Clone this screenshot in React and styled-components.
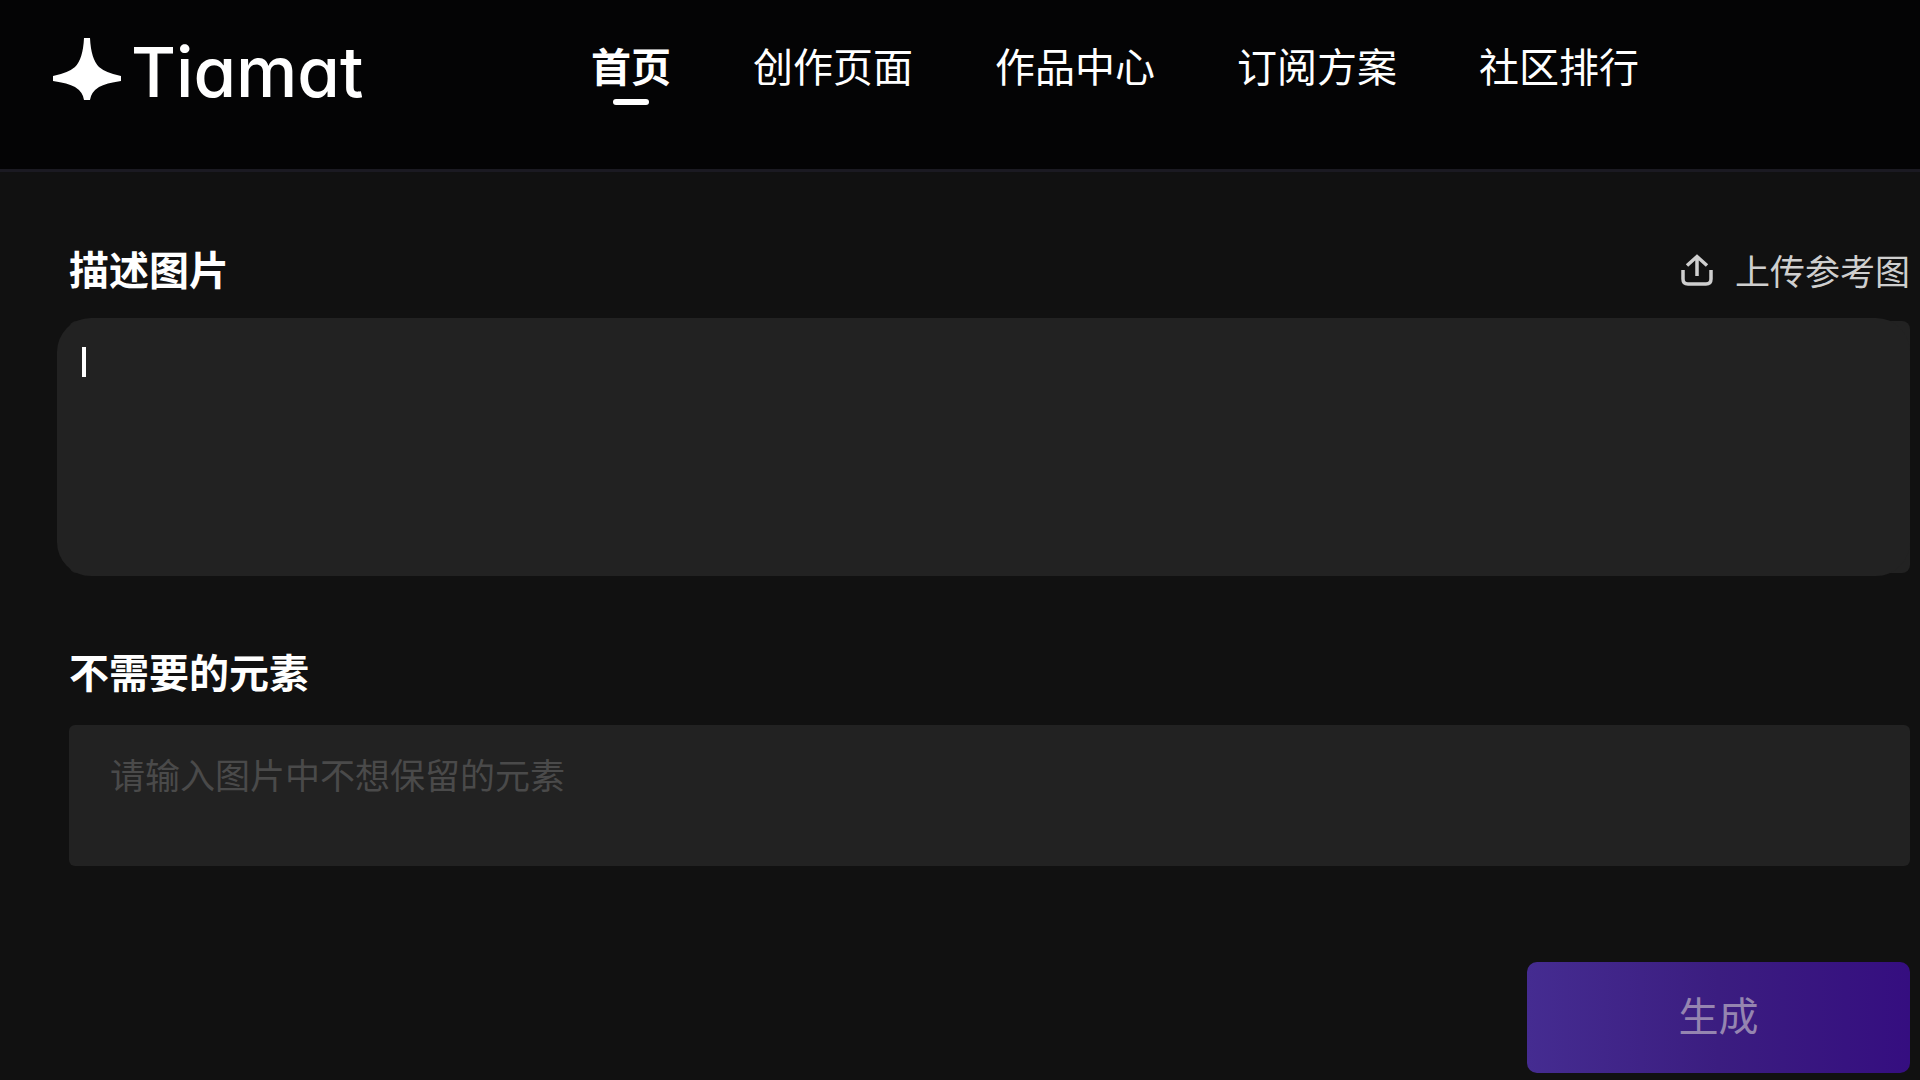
import React, { useState } from 'react'
import styled, { createGlobalStyle } from 'styled-components'

const GlobalStyle = createGlobalStyle`
  * {
    box-sizing: border-box;
  }

  body {
    margin: 0;
    background-color: #111111;
    color: #ffffff;
    font-family: "Noto Sans CJK SC", "Noto Sans", sans-serif;
  }

  button, input, textarea {
    font-family: inherit;
  }
`

const Header = styled.header`
  display: flex;
  align-items: flex-start;
  height: 172px;
  padding: 30px 53px 0;
  background-color: #040405;
  border-bottom: 3px solid #1b1a22;
`

const Brand = styled.a`
  display: flex;
  align-items: flex-start;
  flex: 0 0 538px;
  gap: 10px;
  padding-top: 8px;
  color: #ffffff;
  text-decoration: none;
`

const BrandStar = styled.svg`
  width: 68px;
  height: 62px;
`

/* cv11 is the single-storey a */
const BrandName = styled.span`
  font-family: Inter, "Liberation Sans", sans-serif;
  font-size: 69px;
  font-weight: 500;
  line-height: 68px;
  font-feature-settings: "cv11";
`

const Nav = styled.nav`
  display: flex;
  gap: 82px;
  padding-top: 11px;
`

const NavLink = styled.a`
  display: flex;
  flex-direction: column;
  align-items: center;
  gap: 10px;
  color: #ffffff;
  font-size: 40px;
  font-weight: ${props => props.$active ? 700 : 400};
  line-height: 48px;
  white-space: nowrap;
  text-decoration: none;

  &::after {
    content: "";
    width: 36px;
    height: 6px;
    border-radius: 3px;
    background-color: ${props => props.$active ? '#ffffff' : 'transparent'};
  }
`

const Main = styled.main`
  padding: 72px 10px 7px 69px;
`

const Form = styled.form`
  display: flex;
  flex-direction: column;
`

const FieldHead = styled.div`
  display: flex;
  align-items: center;
  justify-content: space-between;
`

const Label = styled.label`
  font-size: 40px;
  font-weight: 700;
  line-height: 48px;
`

const UploadButton = styled.button`
  display: flex;
  align-items: center;
  gap: 22px;
  padding: 4px 0 0;
  border: none;
  background: none;
  color: #cfcfcf;
  font-size: 35px;
  line-height: 44px;
  cursor: pointer;
`

const PromptBox = styled.div`
  position: relative;
  display: flex;
  margin: 26px 0 71px -12px;

  &::before {
    content: "";
    position: absolute;
    inset: 3px 0 3px 12px;
    border-radius: 8px;
    background-color: #222222;
  }
`

const PromptInput = styled.textarea`
  position: relative;
  width: 100%;
  height: 258px;
  padding: 21px 24px;
  border: none;
  border-radius: 34px;
  outline: none;
  resize: none;
  background-color: #222222;
  color: #ffffff;
  font-size: 35px;
  line-height: 48px;
  caret-color: transparent;
`

const Caret = styled.span`
  position: absolute;
  top: 29px;
  left: 25px;
  width: 4px;
  height: 30px;
  background-color: #ffffff;
`

const ExcludeInput = styled.textarea`
  height: 141px;
  margin: 30px 0 96px;
  padding: 25px 41px;
  border: none;
  border-radius: 6px;
  outline: none;
  resize: none;
  background-color: #222222;
  color: #ffffff;
  font-size: 35px;
  line-height: 48px;

  &::placeholder {
    color: #4a4a4a;
    opacity: 1;
  }
`

const GenerateButton = styled.button`
  align-self: flex-end;
  width: 383px;
  height: 111px;
  padding: 0 0 8px;
  border: none;
  border-radius: 10px;
  background: linear-gradient(90deg, #452c91 0%, #3b1d80 50%, #350e80 100%);
  color: #9585b0;
  font-size: 40px;
  line-height: 48px;
  cursor: pointer;
`

const navItems = ['首页', '创作页面', '作品中心', '订阅方案', '社区排行']

const UploadIcon = () => (
  <svg width="32" height="32" viewBox="0 0 32 32" fill="none" stroke="currentColor" strokeWidth="3.500" aria-hidden="true">
    <path d="M2 16v9q0 5 5 5h18q5 0 5-5v-9" />
    <path d="M16 22V3M6 11.500L16 2.500L26 11.500" />
  </svg>
)

const App = () => {
  const [prompt, setPrompt] = useState('')
  const [exclude, setExclude] = useState('')

  return (
    <>
      <GlobalStyle />
      <Header>
        <Brand href="#">
          <BrandStar viewBox="0 0 68 62" fill="currentColor" aria-hidden="true">
            <path d="M31 0h6q1 21 9 29q7 6 22 9v5q-15 2-22 6q-8 5-9 13h-6q-1-8-9-13q-7-4-22-6v-5q15-3 22-9q8-8 9-29z" />
          </BrandStar>
          <BrandName>Tiamat</BrandName>
        </Brand>
        <Nav>
          {navItems.map((item, index) => (
            <NavLink key={item} href="#" $active={index === 0}>{item}</NavLink>
          ))}
        </Nav>
      </Header>

      <Main>
        <Form onSubmit={(event) => event.preventDefault()}>
          <FieldHead>
            <Label htmlFor="prompt">描述图片</Label>
            <UploadButton type="button">
              <UploadIcon />
              上传参考图
            </UploadButton>
          </FieldHead>
          <PromptBox>
            <PromptInput id="prompt" value={prompt} onChange={(event) => setPrompt(event.target.value)} />
            {prompt === '' && <Caret />}
          </PromptBox>

          <Label htmlFor="exclude">不需要的元素</Label>
          <ExcludeInput
            id="exclude"
            placeholder="请输入图片中不想保留的元素"
            value={exclude}
            onChange={(event) => setExclude(event.target.value)}
          />

          <GenerateButton type="submit">生成</GenerateButton>
        </Form>
      </Main>
    </>
  )
}

export default App
